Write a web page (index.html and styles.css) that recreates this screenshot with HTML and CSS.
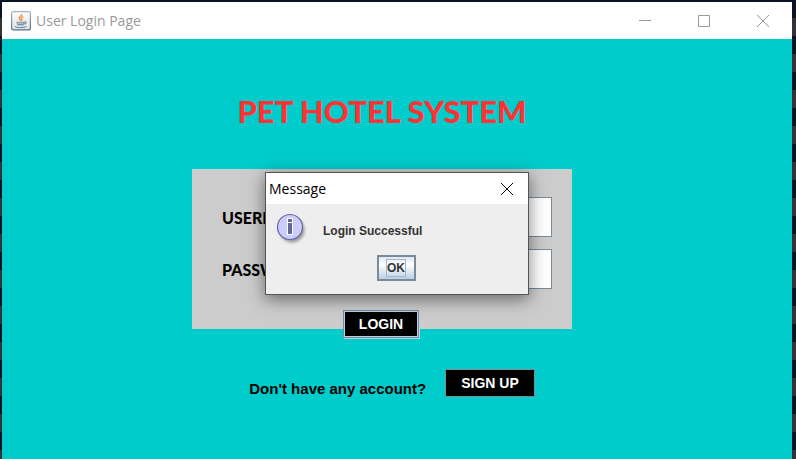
FILE: index.html
```html
<!DOCTYPE html>
<html lang="en">
<head>
<meta charset="utf-8">
<title>User Login Page</title>
<link rel="stylesheet" href="styles.css">
</head>
<body>
<div class="window">
  <header class="titlebar">
    <svg class="app-icon" width="20" height="20" viewBox="0 0 20 20" aria-hidden="true">
      <defs>
        <linearGradient id="tile" x1="0" y1="0" x2="0" y2="1">
          <stop offset="0" stop-color="#fff"/><stop offset="1" stop-color="#dde1e5"/>
        </linearGradient>
        <linearGradient id="edge" x1="0" y1="0" x2="0" y2="1">
          <stop offset="0" stop-color="#a9b4bf"/><stop offset="1" stop-color="#56718a"/>
        </linearGradient>
      </defs>
      <rect x=".6" y=".6" width="18.8" height="18.3" rx="2" fill="url(#tile)" stroke="url(#edge)" stroke-width="1.2"/>
      <path d="M10.6 3c1.3 1.7-3.2 2.600-2.400 4.600.3.900 1.300 1.500 1.500 2.200M12.400 5.600c-1.700.7-2.700 1.400-1.700 2.500.6.700.3 1.300-.3 1.900" fill="none" stroke="#ee9650" stroke-width="1.500"/>
      <path d="M5.500 10.700h8c0 2-.6 3.600-2 3.900H7.700c-1.500-.4-2.200-1.900-2.200-3.900z" fill="#7c95a8"/>
      <path d="M13.200 11c2.700-.8 2.600 1.600-.6 2.300M4 15.300c1.400 1.600 9.600 1.600 11.400 0" fill="none" stroke="#6f8ba1" stroke-width="1.100"/>
      <path d="M6.500 12.200h5.700" stroke="#c5d0d8"/>
    </svg>
    <h1 class="window-title">User Login Page</h1>
    <div class="controls">
      <button class="control" aria-label="Minimize"><svg width="12" height="12" viewBox="0 0 12 12"><path d="M0 5.500h12"/></svg></button>
      <button class="control" aria-label="Maximize"><svg width="12" height="12" viewBox="0 0 12 12"><path d="M.5.500h11v11H.5z"/></svg></button>
      <button class="control" aria-label="Close"><svg width="12" height="12" viewBox="0 0 12 12"><path d="M0 0l12 12M12 0L0 12"/></svg></button>
    </div>
  </header>
  <main class="content">
    <h2 class="heading">PET HOTEL SYSTEM</h2>
    <form class="card">
      <div class="row">
        <label for="username">USERNAME</label>
        <input id="username" type="text">
      </div>
      <div class="row">
        <label for="password">PASSWORD</label>
        <input id="password" type="password">
      </div>
      <button class="dark-button login" type="button">LOGIN</button>
    </form>
    <div class="signup">
      <p>Don't have any account?</p>
      <button class="dark-button" type="button">SIGN UP</button>
    </div>
  </main>
  <section class="dialog" role="dialog" aria-labelledby="dialog-title">
    <header class="dialog-bar">
      <h2 id="dialog-title">Message</h2>
      <button class="dialog-close" aria-label="Close dialog"><svg width="12" height="12" viewBox="0 0 12 12"><path d="M0 0l12 12M12 0L0 12"/></svg></button>
    </header>
    <div class="dialog-body">
      <div class="notice">
        <svg width="32" height="32" viewBox="0 0 32 32" aria-hidden="true">
          <defs><filter id="soft" x="-30%" y="-30%" width="160%" height="160%"><feGaussianBlur stdDeviation="1.500"/></filter></defs>
          <circle cx="16" cy="17" r="12.500" fill="#999" filter="url(#soft)"/>
          <circle cx="14" cy="14" r="12.500" fill="#ccf" stroke="#669" stroke-width="1.200"/>
          <path d="M11 5h6v17h-6z" fill="#fff"/>
          <path d="M12 6h4v3h-4zM12 10h4v11h-4z" fill="#669"/>
        </svg>
        <p>Login Successful</p>
      </div>
      <button class="ok" type="button"><span>OK</span></button>
    </div>
  </section>
</div>
</body>
</html>
```
FILE: styles.css
```css
* {
  box-sizing: border-box;
}

body {
  margin: 0;
  min-height: 100vh;
  padding: 2px 4px 0 2px;
  display: flex;
  background: repeating-linear-gradient(#0b1426 0 18px, #333237 18px 36px);
}

h1, h2, p {
  margin: 0;
}

button {
  padding: 0;
  border: 0;
  background: none;
}

.window {
  position: relative;
  flex: 1;
  display: flex;
  flex-direction: column;
  background: #00cccc;
}

.titlebar {
  display: flex;
  align-items: center;
  height: 37px;
  padding-left: 9px;
  gap: 5px;
  background: #fff;
}

.window-title {
  flex: 1;
  font: 400 14px "Open Sans", sans-serif;
  color: #999;
}

.controls {
  display: flex;
}

.control {
  display: grid;
  place-items: center;
  width: 59px;
  height: 36px;
}

.control path,
.dialog-close path {
  fill: none;
  stroke: #999;
}

.content {
  display: flex;
  flex-direction: column;
  align-items: center;
  padding: 52px 30px 0 0;
}

.heading {
  font: 900 31px/40px Lato, sans-serif;
  color: #ff3333;
}

.card {
  display: flex;
  flex-direction: column;
  gap: 12px;
  width: 380px;
  margin-top: 38px;
  padding: 28px 20px 0 30px;
  background: #ccc;
}

.row {
  display: flex;
  align-items: center;
  justify-content: space-between;
}

.row label {
  font: 900 16px Lato, sans-serif;
  color: #000;
}

.row input {
  width: 200px;
  height: 40px;
  border: 1px solid #7a8a99;
  background: #fff;
  box-shadow: inset -1px -1px #fff;
}

.dark-button {
  height: 28px;
  padding: 0 15px;
  border: 1px solid #7a8a99;
  background: #000;
  color: #fff;
  font: bold 14px "Liberation Sans", Arial, sans-serif;
}

.login {
  align-self: center;
  margin: 9px 12px -9px 0;
  outline: 1px solid #b8cfe5;
  outline-offset: -2px;
  box-shadow: 1px 1px #b8cfe5;
}

.signup {
  display: flex;
  align-items: center;
  gap: 19px;
  margin: 40px 0 0 20px;
}

.signup p {
  padding-top: 10px;
  font: bold 15px "Liberation Sans", Arial, sans-serif;
}

.dialog {
  position: absolute;
  top: 170px;
  left: 50%;
  width: 264px;
  transform: translateX(-50%);
  border: 1px solid #555;
  background: #eee;
  box-shadow: 0 4px 16px rgba(0, 0, 0, 0.5);
}

.dialog-bar {
  display: flex;
  align-items: center;
  justify-content: space-between;
  height: 31px;
  padding: 0 15px 0 3px;
  background: #fff;
}

.dialog-bar h2 {
  font: 400 14px "Open Sans", sans-serif;
  color: #000;
}

.dialog-close {
  display: grid;
}

.dialog-close path {
  stroke: #000;
}

.dialog-body {
  display: flex;
  flex-direction: column;
  align-items: center;
  gap: 10px;
  padding: 9px 12px 13px 10px;
}

.notice {
  display: flex;
  align-items: center;
  align-self: stretch;
  gap: 15px;
}

.notice p {
  padding-top: 4px;
  font: bold 12px "Liberation Sans", Arial, sans-serif;
  color: #333;
}

.ok {
  width: 39px;
  height: 26px;
  border: 2px solid #7a8a99;
  background: linear-gradient(#dde8f3, #fff 35%, #b8cfe5);
  font: bold 12px/16px "Liberation Sans", Arial, sans-serif;
  color: #333;
}

.ok span {
  display: inline-block;
  border: 1px solid #a3b8cc;
}
```
